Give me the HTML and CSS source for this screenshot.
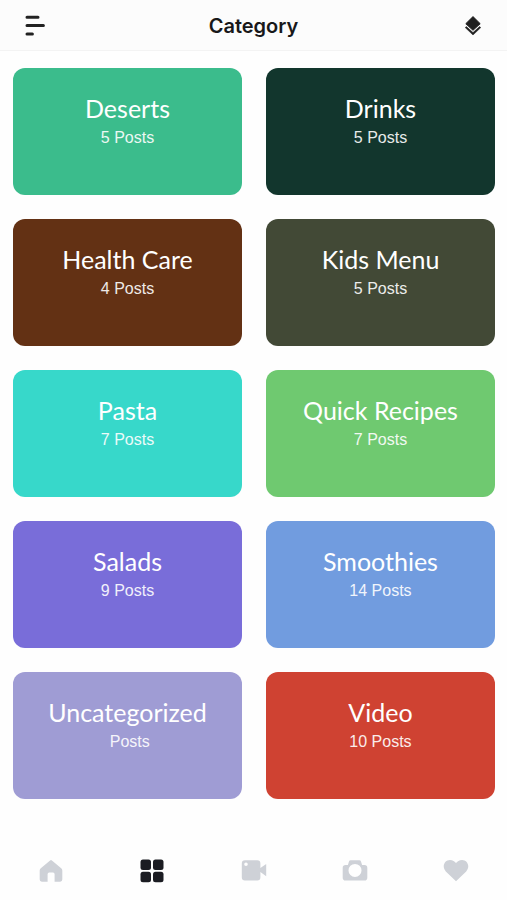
FILE: index.html
```html
<!DOCTYPE html>
<html lang="en">
<head>
<meta charset="utf-8">
<meta name="viewport" content="width=device-width, initial-scale=1">
<title>Category</title>
<link rel="stylesheet" href="styles.css">
</head>
<body>
<header class="topbar">
  <button class="icon-button" type="button" aria-label="Menu">
    <svg width="22" height="22" viewBox="0 0 22 22" fill="none" stroke="#222" stroke-width="3" stroke-linecap="round"><path d="M4 2.2H15M4 10.6H20.4M4 18.9H9.4"/></svg>
  </button>
  <h1 class="topbar-title">Category</h1>
  <button class="icon-button" type="button" aria-label="Layers">
    <svg width="18" height="20" viewBox="0 0 18 20" fill="#202020" stroke="#202020" stroke-linejoin="round"><path d="M9 .6L16.2 7.7L9 14.3L1.8 7.7Z"/><path d="M1.2 11.6L2.4 10.6L9 16.5L15.6 10.6L16.8 11.6L9 19Z" stroke-width=".5"/></svg>
  </button>
</header>
<main class="categories">
  <a class="card deserts" href="#deserts"><h2 class="card-title">Deserts</h2><p class="card-count">5 Posts</p></a>
  <a class="card drinks" href="#drinks"><h2 class="card-title">Drinks</h2><p class="card-count">5 Posts</p></a>
  <a class="card health" href="#health"><h2 class="card-title">Health Care</h2><p class="card-count">4 Posts</p></a>
  <a class="card kids" href="#kids"><h2 class="card-title">Kids Menu</h2><p class="card-count">5 Posts</p></a>
  <a class="card pasta" href="#pasta"><h2 class="card-title">Pasta</h2><p class="card-count">7 Posts</p></a>
  <a class="card quick" href="#quick"><h2 class="card-title">Quick Recipes</h2><p class="card-count">7 Posts</p></a>
  <a class="card salads" href="#salads"><h2 class="card-title">Salads</h2><p class="card-count">9 Posts</p></a>
  <a class="card smoothies" href="#smoothies"><h2 class="card-title">Smoothies</h2><p class="card-count">14 Posts</p></a>
  <a class="card uncategorized" href="#uncategorized"><h2 class="card-title">Uncategorized</h2><p class="card-count">&nbsp;Posts</p></a>
  <a class="card video" href="#video"><h2 class="card-title">Video</h2><p class="card-count">10 Posts</p></a>
</main>
<nav class="tabbar" aria-label="Main">
  <a class="tab" href="#home" aria-label="Home">
    <svg width="26" height="24" viewBox="0 0 26 24" fill="currentColor"><path d="M12.1 1.4Q13 .7 13.9 1.4L23.2 9.3Q24.3 10.3 24.3 11.5V20.6Q24.3 22.7 22.2 22.7H16.6V15.2Q16.6 13.6 15 13.6H11.2Q9.6 13.6 9.6 15.2V22.7H3.8Q1.7 22.7 1.7 20.6V11.5Q1.7 10.3 2.8 9.3Z"/></svg>
  </a>
  <a class="tab tab-active" href="#categories" aria-label="Categories" aria-current="page">
    <svg width="26" height="24" viewBox="0 0 26 24" fill="currentColor"><rect x="1.5" y=".5" width="10.5" height="10.5" rx="2.5"/><rect x="14" y=".5" width="10.5" height="10.5" rx="2.5"/><rect x="1.5" y="12.7" width="10.5" height="10.5" rx="2.5"/><rect x="14" y="12.7" width="10.5" height="10.5" rx="2.5"/></svg>
  </a>
  <a class="tab" href="#videos" aria-label="Videos">
    <svg width="26" height="24" viewBox="0 0 26 24" fill="currentColor"><path fill-rule="evenodd" d="M4 1.3H16.2Q19.4 1.3 19.4 4.5V9.1L25.2 5V17.2L19.4 13.1V18.3Q19.4 21.5 16.2 21.5H4Q.8 21.5 .8 18.3V4.5Q.8 1.3 4 1.3ZM5 3.5A1.8 1.8 0 1 0 5 7.1A1.8 1.8 0 1 0 5 3.5Z"/></svg>
  </a>
  <a class="tab" href="#photos" aria-label="Photos">
    <svg width="26" height="24" viewBox="0 0 26 24" fill="currentColor"><path fill-rule="evenodd" d="M8.6 1.3H17.4Q18.6 1.3 19 2.5L20.1 6H22.4Q25.3 6 25.3 8.8V18.7Q25.3 21.5 22.4 21.5H3.6Q.7 21.5 .7 18.7V8.8Q.7 6 3.6 6H5.9L7 2.5Q7.4 1.3 8.6 1.3ZM13 4.9A6.5 6.5 0 1 0 13 17.9A6.5 6.5 0 1 0 13 4.9Z"/></svg>
  </a>
  <a class="tab" href="#favorites" aria-label="Favorites">
    <svg width="26" height="24" viewBox="0 0 26 24" fill="currentColor"><path d="M13 22.3L2.8 12.5C-2.8 6 4-2.2 11 2.3L13 4L15 2.3C22-2.2 28.8 6 23.2 12.5Z"/></svg>
  </a>
</nav>
</body>
</html>
```
FILE: styles.css
```css
* {
  box-sizing: border-box;
}

body {
  margin: 0;
  min-height: 100vh;
  display: flex;
  flex-direction: column;
  background: #fefefe;
  font-family: "Liberation Sans", Arial, sans-serif;
}

.topbar {
  display: flex;
  align-items: center;
  justify-content: space-between;
  height: 51px;
  padding: 1px 20px 0;
  background: #fcfcfc;
  border-bottom: 1px solid #f3f3f3;
}

.icon-button {
  display: flex;
  align-items: center;
  justify-content: center;
  width: 28px;
  height: 32px;
  padding: 0;
  border: 0;
  background: none;
}

.topbar-title {
  margin: 0;
  color: #18181a;
  font: 600 20px/24px Inter, sans-serif;
}

.categories {
  display: grid;
  grid-template-columns: 1fr 1fr;
  gap: 24px;
  padding: 17px 12px 24px 13px;
}

.card {
  min-height: 127px;
  padding: 24px 8px;
  border-radius: 12px;
  color: #fff;
  text-align: center;
  text-decoration: none;
}

.card-title {
  margin: 0;
  font: 400 25px/32px Lato, sans-serif;
}

.card-count {
  margin: 4px 0 0;
  font-size: 16px;
  line-height: 20px;
  opacity: 0.9;
}

.deserts { background: #3bbc8c; }
.drinks { background: #12362d; }
.health { background: #633114; }
.kids { background: #424936; }
.pasta { background: #37d8ca; }
.quick { background: #6fc970; }
.salads { background: #796dd9; }
.smoothies { background: #719cdf; }
.uncategorized { background: #9f9cd4; }
.video { background: #cf4232; }

.tabbar {
  display: flex;
  margin-top: auto;
  padding: 8px 0 17px;
}

.tab {
  flex: 1;
  display: flex;
  justify-content: center;
  color: #ced1d7;
}

.tab-active {
  color: #1b1c22;
}
```
